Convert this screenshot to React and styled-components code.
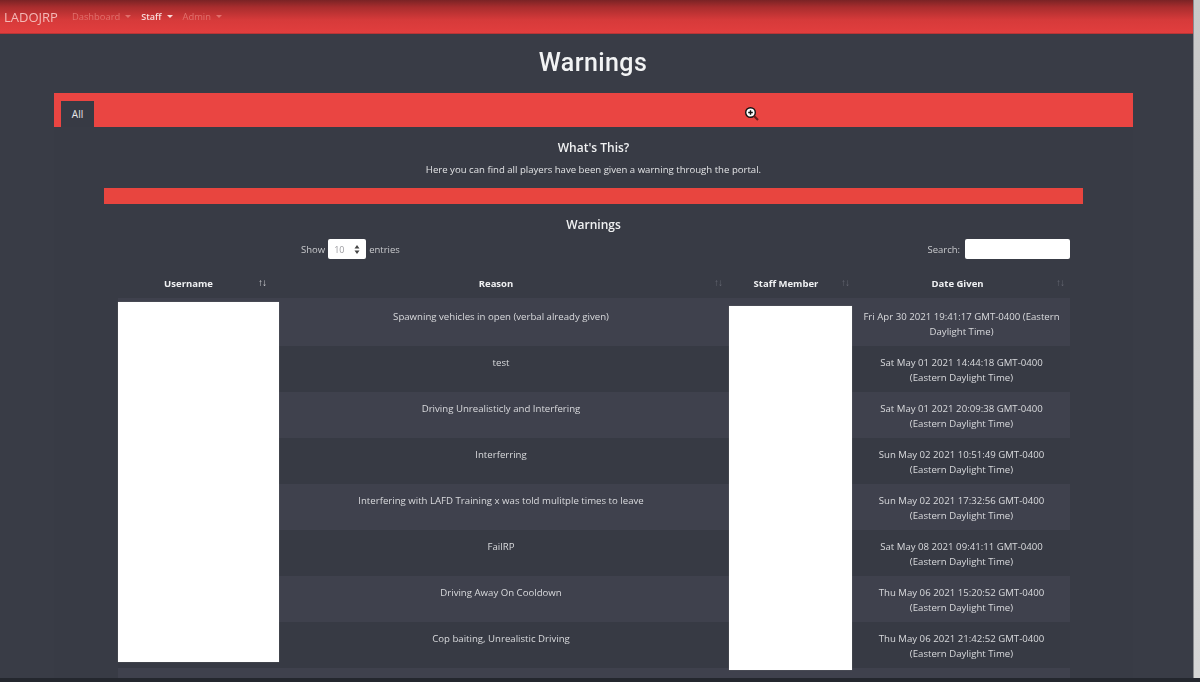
import styled, { createGlobalStyle } from "styled-components";

///////////////////// STYLED COMPONENTS /////////////////////
const GlobalStyle = createGlobalStyle`
    html, body {
        margin: 0;
        height: 682px;
        overflow: hidden;
        background-color: #393c46;
        font-family: "Open Sans", "Liberation Sans", sans-serif;
    }
`

const Screen = styled.div`
    display: flex;
    width: 1200px;
    height: 682px;
    overflow: hidden;
    position: relative;
    filter: blur(0.45px);
`

const Page = styled.div`
    flex: 1;
    min-width: 0;
    display: flex;
    flex-direction: column;
`

const Scrollbar = styled.div`
    width: 7px;
    background: linear-gradient(#c9c9c9, #d6d6d6);
    border-left: 1px solid #8b8c90;
    box-sizing: border-box;
    margin-bottom: 4px;
`

const BottomEdge = styled.div`
    position: absolute;
    left: 0;
    right: 0;
    bottom: 0;
    height: 4px;
    background-color: #24272e;
`

const Navbar = styled.nav`
    height: 34px;
    flex: none;
    box-sizing: border-box;
    display: flex;
    align-items: center;
    gap: 10px;
    padding: 0 0 0 4px;
    background: linear-gradient(#7a2325 0, #a92d2e 22%, #d63a3a 60%, #e23e3e 100%);
    border-bottom: 1px solid #b93536;
`

const Brand = styled.span`
    color: #f3b9b6;
    font-size: 13px;
    margin-right: 4px;
`

const NavLink = styled.span`
    display: flex;
    align-items: center;
    gap: 5px;
    font-size: ${(p) => (p.$active ? 9 : 9.4)}px;
    color: ${(p) => (p.$active ? "#f6dcda" : "#e0706c")};
    font-weight: ${(p) => (p.$active ? 600 : 400)};

    &::after {
        content: "";
        border-top: 3px solid currentColor;
        border-left: 3px solid transparent;
        border-right: 3px solid transparent;
    }
`

const Heading = styled.h1`
    margin: 0;
    height: 59px;
    line-height: 58px;
    padding-right: 7px;
    text-align: center;
    color: #f2f3f4;
    font-size: 25px;
    font-weight: 500;
    font-family: Roboto, "Open Sans", sans-serif;
    letter-spacing: 0.4px;
`

const Card = styled.section`
    margin: 0 60px 0 54px;
    flex: 1;
    min-height: 0;
    display: flex;
    flex-direction: column;
    background-color: #383b45;
`

const TabBar = styled.div`
    height: 34px;
    flex: none;
    box-sizing: border-box;
    display: flex;
    align-items: flex-end;
    padding-left: 7px;
    background-color: #ea4542;
    position: relative;
`

const Tab = styled.div`
    width: 33px;
    height: 26px;
    display: flex;
    align-items: center;
    justify-content: center;
    background-color: #373a44;
    color: #e8e8ea;
    font-size: 10px;
`

const Cursor = styled.svg`
    position: absolute;
    left: 690px;
    top: 13px;
`

const CardBody = styled.div`
    flex: 1;
    min-height: 0;
    padding: 0 50px;
    display: flex;
    flex-direction: column;
    text-align: center;
`

const SectionTitle = styled.h3`
    margin: 13px 0 0;
    color: #f0f1f2;
    font-size: 12px;
    line-height: 16px;
    font-weight: 600;
`

const Blurb = styled.p`
    margin: 7px 0 0;
    color: #e2e3e5;
    font-size: 9.6px;
    line-height: 14px;
`

const RedBar = styled.div`
    height: 16px;
    flex: none;
    margin-top: 11px;
    background-color: #e8453f;
`

const Controls = styled.div`
    display: flex;
    align-items: center;
    justify-content: space-between;
    margin: 6px 13px 0 14px;
    height: 20px;
    color: #c9cacd;
    font-size: 9.5px;
`

const ShowGroup = styled.label`
    display: flex;
    align-items: center;
    gap: 3px;
    margin-left: 183px;
`

const FakeSelect = styled.span`
    width: 38px;
    height: 20px;
    box-sizing: border-box;
    padding: 0 6px;
    display: flex;
    align-items: center;
    justify-content: space-between;
    background-color: #fff;
    border-radius: 2px;
    color: #9a9a9f;
    font-size: 9px;
`

const SelectArrows = styled.svg`
    display: block;
`

const SearchGroup = styled.label`
    display: flex;
    align-items: center;
    gap: 5px;
`

const SearchBox = styled.span`
    display: block;
    width: 105px;
    height: 20px;
    background-color: #fff;
    border-radius: 2px;
`

const TableWrap = styled.div`
    position: relative;
    margin: 10px 13px 0 14px;
`

const Grid = styled.div`
    display: grid;
    grid-template-columns: 161px 444px 130px 217px;
`

const HeadCell = styled.div`
    height: 29px;
    position: relative;
    display: flex;
    align-items: center;
    justify-content: center;
    box-sizing: border-box;
    padding-right: ${(p) => p.$pad}px;
    color: #f0f1f3;
    font-size: 9.5px;
    font-weight: 700;
`

const SortMark = styled.span`
    position: absolute;
    right: ${(p) => p.$right}px;
    top: 7px;
    font-size: 10px;
    letter-spacing: -1px;
    line-height: 12px;
    font-weight: 400;
    color: ${(p) => (p.$active ? "#d4d5d8" : "#666974")};
`

const Cell = styled.div`
    height: ${(p) => (p.$first ? 48 : 46)}px;
    box-sizing: border-box;
    padding: ${(p) => (p.$first ? 10.5 : 8.5)}px 9px 0;
    background-color: ${(p) => (p.$odd ? "#3f414d" : "#373a44")};
    color: #d9dadd;
    font-size: 9.65px;
    line-height: 15px;
    text-align: center;
`

const Redaction = styled.div`
    position: absolute;
    background-color: #fff;
    box-shadow: 0 0 1px #777;
    left: ${(p) => p.$left}px;
    top: ${(p) => p.$top}px;
    width: ${(p) => p.$width}px;
    height: ${(p) => p.$height}px;
`
/////////////////////////////////////////////////////////////

const warnings = [
    ["Spawning vehicles in open (verbal already given)", "Fri Apr 30 2021 19:41:17 GMT-0400 (Eastern Daylight Time)"],
    ["test", "Sat May 01 2021 14:44:18 GMT-0400 (Eastern Daylight Time)"],
    ["Driving Unrealisticly and Interfering", "Sat May 01 2021 20:09:38 GMT-0400 (Eastern Daylight Time)"],
    ["Interferring", "Sun May 02 2021 10:51:49 GMT-0400 (Eastern Daylight Time)"],
    ["Interfering with LAFD Training x was told mulitple times to leave", "Sun May 02 2021 17:32:56 GMT-0400 (Eastern Daylight Time)"],
    ["FailRP", "Sat May 08 2021 09:41:11 GMT-0400 (Eastern Daylight Time)"],
    ["Driving Away On Cooldown", "Thu May 06 2021 15:20:52 GMT-0400 (Eastern Daylight Time)"],
    ["Cop baiting, Unrealistic Driving", "Thu May 06 2021 21:42:52 GMT-0400 (Eastern Daylight Time)"],
    ["", ""],
];

function Row({ index, reason, date }) {
    const odd = index % 2 === 0;
    const first = index === 0;
    return (
        <>
            <Cell $odd={odd} $first={first} />
            <Cell $odd={odd} $first={first}>{reason}</Cell>
            <Cell $odd={odd} $first={first} />
            <Cell $odd={odd} $first={first}>{date}</Cell>
        </>
    );
}

export default function App() {
    return (
        <Screen>
            <GlobalStyle />
            <Page>
                <Navbar>
                    <Brand>LADOJRP</Brand>
                    <NavLink>Dashboard</NavLink>
                    <NavLink $active>Staff</NavLink>
                    <NavLink>Admin</NavLink>
                </Navbar>
                <Heading>Warnings</Heading>
                <Card>
                    <TabBar>
                        <Tab>All</Tab>
                        <Cursor width="16" height="16" viewBox="0 0 16 16">
                            <circle cx="6.5" cy="6.5" r="4.8" fill="#fff" stroke="#111" strokeWidth="1.4" />
                            <path d="M4.2 6.5h4.6M6.5 4.2v4.6" stroke="#111" strokeWidth="1.4" />
                            <path d="M10 10l4 4" stroke="#6b1c1c" strokeWidth="2.2" />
                        </Cursor>
                    </TabBar>
                    <CardBody>
                        <SectionTitle>What's This?</SectionTitle>
                        <Blurb>Here you can find all players have been given a warning through the portal.</Blurb>
                        <RedBar />
                        <SectionTitle>Warnings</SectionTitle>
                        <Controls>
                            <ShowGroup>
                                Show
                                <FakeSelect>
                                    10
                                    <SelectArrows width="6" height="9" viewBox="0 0 6 9">
                                        <path d="M3 0l2.5 3.4h-5zM3 9L.5 5.6h5z" fill="#444" />
                                    </SelectArrows>
                                </FakeSelect>
                                entries
                            </ShowGroup>
                            <SearchGroup>
                                Search:
                                <SearchBox />
                            </SearchGroup>
                        </Controls>
                        <TableWrap>
                            <Grid>
                                <HeadCell $pad={20}>Username<SortMark $right={13} $active>↑↓</SortMark></HeadCell>
                                <HeadCell $pad={10}>Reason<SortMark $right={1}>↑↓</SortMark></HeadCell>
                                <HeadCell $pad={4}>Staff Member<SortMark $right={4}>↑↓</SortMark></HeadCell>
                                <HeadCell $pad={8}>Date Given<SortMark $right={6}>↑↓</SortMark></HeadCell>
                                {warnings.map(([reason, date], i) => (
                                    <Row key={i} index={i} reason={reason} date={date} />
                                ))}
                            </Grid>
                            <Redaction $left={0} $top={33} $width={161} $height={360} />
                            <Redaction $left={611} $top={37} $width={123} $height={364} />
                        </TableWrap>
                    </CardBody>
                </Card>
            </Page>
            <Scrollbar />
            <BottomEdge />
        </Screen>
    );
}
